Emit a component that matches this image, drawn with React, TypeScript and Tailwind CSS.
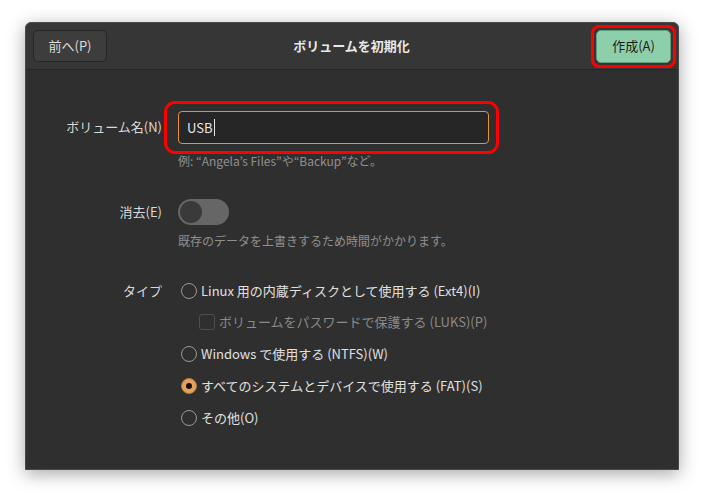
import React from "react";

const font = { fontFamily: '"Noto Sans CJK JP", "Noto Sans", sans-serif' };

function Radio({ checked }: { checked?: boolean }) {
  return checked ? (
    <span className="w-[16px] h-[16px] rounded-full bg-[#e2a15c] border border-[#b77a3a] flex items-center justify-center shrink-0">
      <span className="w-[6px] h-[6px] rounded-full bg-[#111]" />
    </span>
  ) : (
    <span className="w-[16px] h-[16px] rounded-full border border-[#9a9a9a] shrink-0" />
  );
}

export default function App() {
  return (
    <div className="w-[704px] h-[499px] bg-white pt-[22px] pl-[25px]" style={font}>
      <div className="w-[654px] h-[448px] bg-[#2f2f2f] rounded-t-[6px] border border-[#4a4a4a] shadow-[0_4px_18px_rgba(0,0,0,0.35)] flex flex-col overflow-visible">
        {/* header */}
        <div className="h-[47px] bg-[#363636] border-b border-[#262626] rounded-t-[6px] flex items-center justify-between px-[7px]">
          <button className="w-[74px] h-[32px] rounded-[5px] bg-[#3d3d3d] border border-[#262626] text-[13px] text-[#dcdcdc]">
            前へ(P)
          </button>
          <div className="text-[13px] font-bold text-[#e8e8e8]">ボリュームを初期化</div>
          <div className="relative">
            <button className="w-[75px] h-[33px] rounded-[5px] bg-[#8ecfab] border border-[#5e9e7b] text-[13px] text-[#1c1c1c]">
              作成(A)
            </button>
            <span className="absolute -left-[5px] -right-[5px] -top-[5px] -bottom-[5px] border-[3px] border-[#ff0000] rounded-[8px] pointer-events-none" />
          </div>
        </div>
        {/* body */}
        <div className="flex-1 pt-[41px]">
          <div className="grid grid-cols-[136px_1fr] gap-x-[16px]">
            <div className="h-[32px] flex items-center justify-end text-[13px] text-[#d8d8d8]">ボリューム名(N)</div>
            <div className="relative w-[311px]">
              <div className="h-[33px] rounded-[4px] border border-[#e8913a] bg-[#262626] flex items-center px-[8px] text-[13px] text-[#e6e6e6]">
                USB<span className="w-px h-[17px] bg-[#e6e6e6] ml-px" />
              </div>
              <span className="absolute -left-[14px] -right-[10px] -top-[10px] -bottom-[10px] border-[3px] border-[#ff0000] rounded-[11px] pointer-events-none" />
            </div>
            <div />
            <div className="mt-[8px] text-[12px] text-[#8f8f8f] leading-[17px]">例: “Angela’s Files”や“Backup”など。</div>

            <div className="mt-[30px] h-[26px] flex items-center justify-end text-[13px] text-[#d8d8d8]">消去(E)</div>
            <div className="mt-[30px]">
              <div className="w-[51px] h-[26px] rounded-full bg-[#666666] flex items-center px-[2px]">
                <span className="w-[22px] h-[22px] rounded-full bg-[#3a3a3a]" />
              </div>
            </div>
            <div />
            <div className="mt-[7px] text-[12px] text-[#8f8f8f] leading-[17px]">既存のデータを上書きするため時間がかかります。</div>

            <div className="mt-[31px] h-[22px] flex items-center justify-end text-[13px] text-[#d8d8d8]">タイプ</div>
            <div className="mt-[31px] flex flex-col pl-[3px] text-[13px] text-[#e0e0e0]">
              <div className="h-[22px] flex items-center gap-[4px]">
                <Radio />
                <span>Linux 用の内蔵ディスクとして使用する (Ext4)(I)</span>
              </div>
              <div className="h-[22px] mt-[9px] flex items-center gap-[4px] pl-[18px] text-[#8a8a8a]">
                <span className="w-[16px] h-[16px] rounded-[3px] border border-[#4e4e4e] shrink-0" />
                <span>ボリュームをパスワードで保護する (LUKS)(P)</span>
              </div>
              <div className="h-[22px] mt-[10px] flex items-center gap-[4px]">
                <Radio />
                <span>Windows で使用する (NTFS)(W)</span>
              </div>
              <div className="h-[22px] mt-[10px] flex items-center gap-[4px]">
                <Radio checked />
                <span>すべてのシステムとデバイスで使用する (FAT)(S)</span>
              </div>
              <div className="h-[22px] mt-[10px] flex items-center gap-[4px]">
                <Radio />
                <span>その他(O)</span>
              </div>
            </div>
          </div>
        </div>
      </div>
    </div>
  );
}
